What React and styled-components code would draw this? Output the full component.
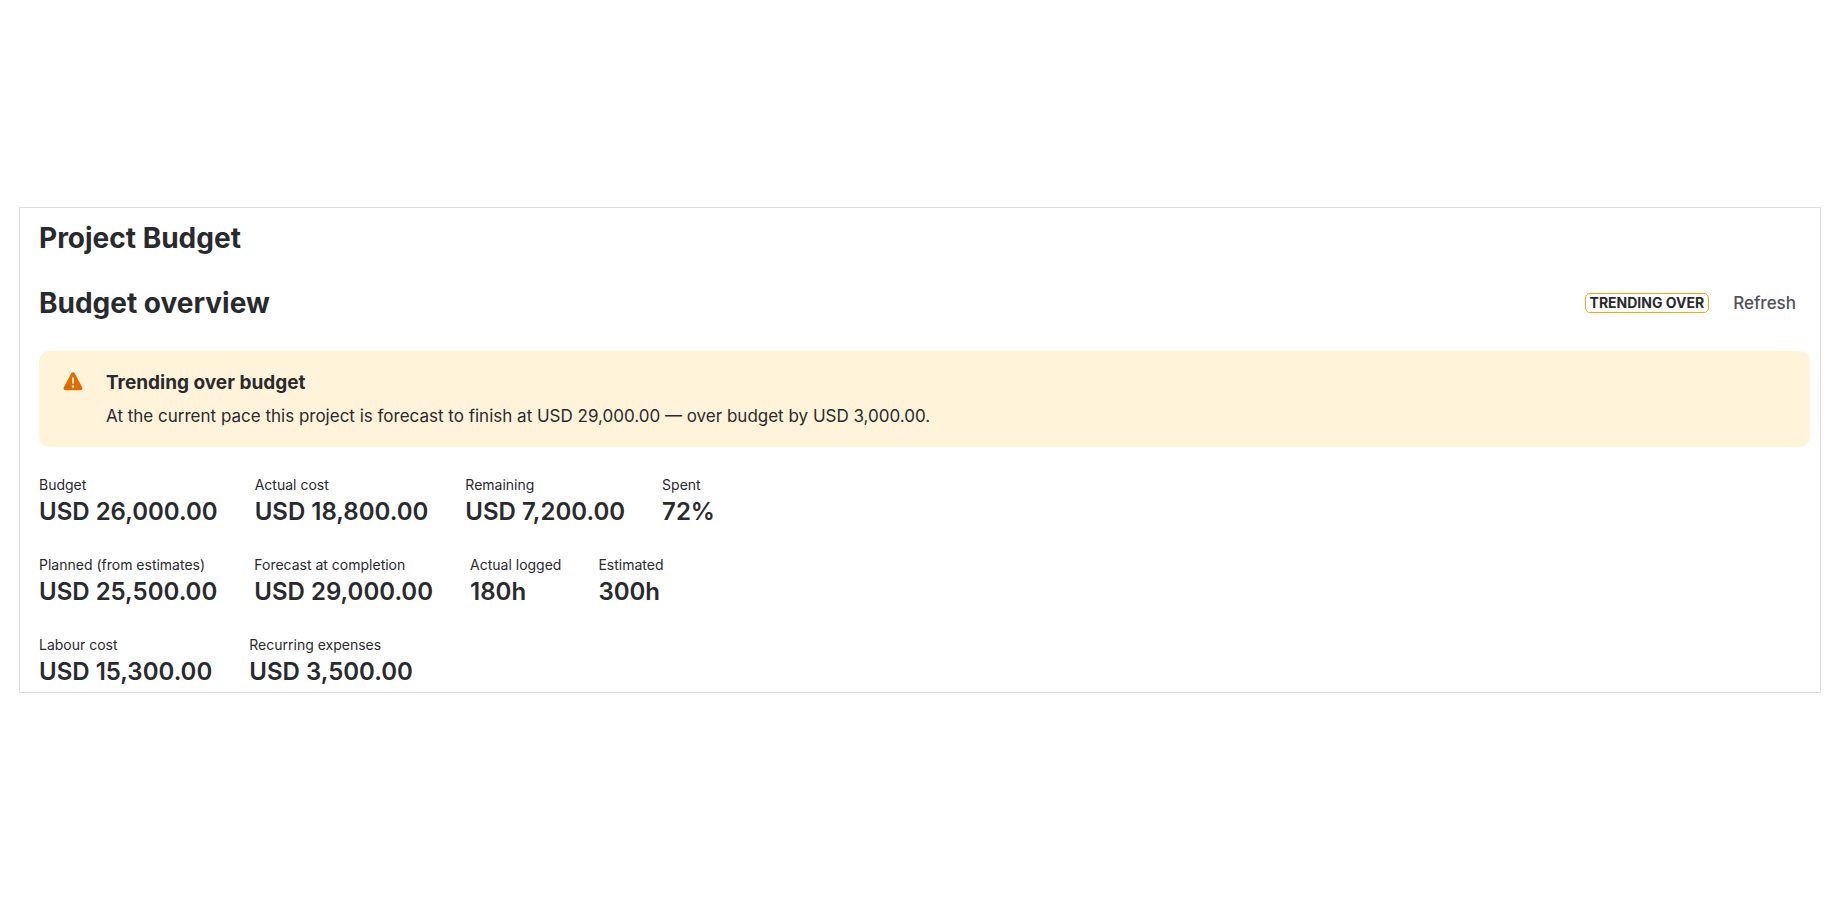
import React from 'react';
import styled, { createGlobalStyle } from 'styled-components';

const Global = createGlobalStyle`
  * { box-sizing: border-box; }
  body { margin: 0; background: #fff; color: #292a2e; font-family: Inter, "Liberation Sans", sans-serif; }
  h1, h2, h3, p, dl, dt, dd { margin: 0; }
`;
const Page = styled.main`
  min-height: 100vh;
  display: flex;
  flex-direction: column;
  justify-content: center;
  padding: 0 19px;
`;
const Panel = styled.section`
  border: 1px solid #dddee1;
  padding: 14px 10px 3px 19px;
`;
const Title = styled.h1`
  font-size: 28px;
  line-height: 32px;
  font-weight: 650;
`;
const Header = styled.header`
  display: flex;
  align-items: center;
  justify-content: space-between;
  margin-top: 33px;
`;
const Actions = styled.div`
  display: flex;
  align-items: center;
  gap: 12px;
`;
const Lozenge = styled.span`
  border: 1px solid #fca700;
  border-radius: 5px;
  padding: 0 4px;
  font-size: 14px;
  line-height: 18px;
  font-weight: 650;
`;
const Refresh = styled.button`
  border: 0;
  background: none;
  padding: 0 14px 0 12px;
  font: 500 17px/32px Inter, "Liberation Sans", sans-serif;
  color: #505258;
`;
const Notice = styled.section`
  display: flex;
  gap: 22px;
  margin: 32px 0 28px;
  padding: 19px 23px;
  border-radius: 10px;
  background: #fff4da;
`;
const NoticeTitle = styled.h3`
  font-size: 19px;
  line-height: 25px;
  font-weight: 700;
`;
const NoticeText = styled.p`
  margin-top: 9px;
  font-size: 17px;
  line-height: 24px;
`;
const StatRows = styled.div`
  display: grid;
  gap: 26px;
`;
const Stats = styled.dl`
  display: flex;
  gap: 37px;
`;
const Label = styled.dt`
  font-size: 14px;
  line-height: 20px;
`;
const Value = styled.dd`
  font-size: 24px;
  line-height: 34px;
  font-weight: 600;
`;
const rows = [
  [['Budget', 'USD 26,000.00'], ['Actual cost', 'USD 18,800.00'], ['Remaining', 'USD 7,200.00'], ['Spent', '72%']],
  [['Planned (from estimates)', 'USD 25,500.00'], ['Forecast at completion', 'USD 29,000.00'], ['Actual logged', '180h'], ['Estimated', '300h']],
  [['Labour cost', 'USD 15,300.00'], ['Recurring expenses', 'USD 3,500.00']],
];

const WarningIcon = () => (
  <svg width="22" height="24" viewBox="0 0 22 24" aria-hidden="true">
    <path d="M9.300 3.200a2 2 0 0 1 3.400 0l7.500 14a2 2 0 0 1-1.700 3h-15a2 2 0 0 1-1.700-3z" fill="#e06c00" />
    <path d="M11 7.500v6" stroke="#fff4da" strokeWidth="1.800" />
    <circle cx="11" cy="16.500" r="1.200" fill="#fff4da" />
  </svg>
);

export default function App() {
  return (
    <Page>
      <Global />
      <Panel>
        <Title>Project Budget</Title>
        <Header>
          <Title as="h2">Budget overview</Title>
          <Actions>
            <Lozenge>TRENDING OVER</Lozenge>
            <Refresh type="button">Refresh</Refresh>
          </Actions>
        </Header>
        <Notice>
          <WarningIcon />
          <div>
            <NoticeTitle>Trending over budget</NoticeTitle>
            <NoticeText>At the current pace this project is forecast to finish at USD 29,000.00 — over budget by USD 3,000.00.</NoticeText>
          </div>
        </Notice>
        <StatRows>
          {rows.map((row) => (
            <Stats key={row[0][0]}>
              {row.map(([label, value]) => (
                <div key={label}>
                  <Label>{label}</Label>
                  <Value>{value}</Value>
                </div>
              ))}
            </Stats>
          ))}
        </StatRows>
      </Panel>
    </Page>
  );
}
